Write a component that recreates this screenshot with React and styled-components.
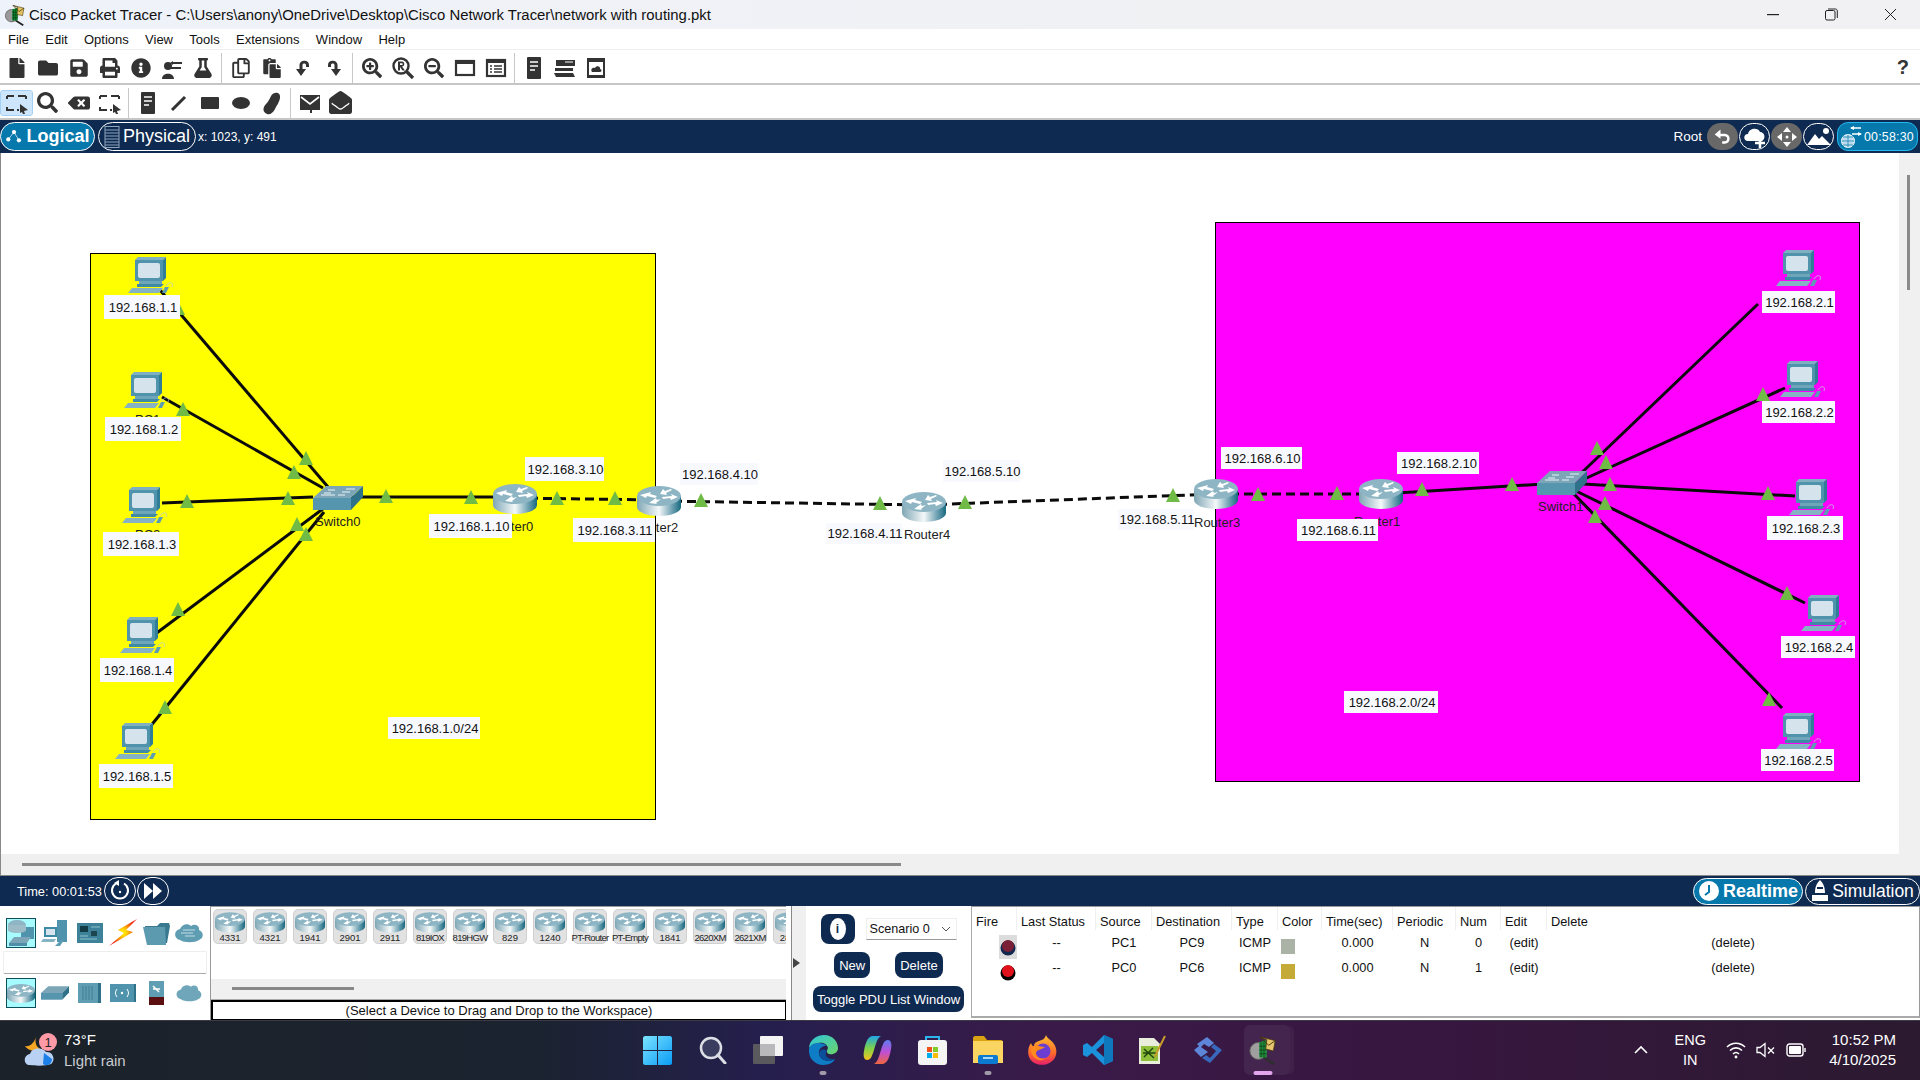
import React, { useId } from 'react';
import styled, { createGlobalStyle } from 'styled-components';
import {
  FaFile, FaFolder, FaSave, FaPrint, FaInfoCircle, FaFlask, FaRegCopy, FaPaste,
  FaSearch, FaSearchPlus, FaSearchMinus, FaBackspace, FaEnvelopeOpen,
} from 'react-icons/fa';

const CANVAS_TOP = 153;
const CANVAS_LEFT = 1;
const NAVY = '#0f2a50';
const BLUE = '#0678ab';

const GlobalStyle = createGlobalStyle`
  html, body {
    margin: 0;
    padding: 0;
    background: #fff;
  }
  * {
    box-sizing: border-box;
  }
  body {
    font-family: "Liberation Sans", Arial, sans-serif;
    color: #111;
  }
`;

const Screen = styled.div`
  width: 1920px;
  height: 1080px;
  display: flex;
  flex-direction: column;
  overflow: hidden;
`;

/* title bar */
const TitleBar = styled.div`
  height: 29px;
  display: flex;
  align-items: center;
  padding-left: 4px;
  background: linear-gradient(90deg, #eef2fa, #f1f1f3 70%);
`;

const TitleText = styled.span`
  margin-left: 3px;
  font-size: 14.9px;
  white-space: nowrap;
`;

const WindowButtons = styled.div`
  margin-left: auto;
  display: flex;
`;

const WindowButton = styled.div`
  width: 59px;
  height: 29px;
  display: flex;
  align-items: center;
  justify-content: center;
`;

/* menu + toolbars */
const MenuBar = styled.div`
  height: 21px;
  display: flex;
  align-items: center;
  gap: 16.3px;
  padding-left: 8px;
  font-size: 13px;
  background: #fff;
  border-bottom: 1px solid #eee;
`;

const ToolBar = styled.div`
  height: 35px;
  display: flex;
  align-items: center;
  padding: 2px 11px 0 1px;
  background: #fff;
  border-bottom: 2px solid #c6c6c6;
`;

const ToolSlot = styled.div`
  width: 31px;
  height: 24px;
  flex: none;
  display: flex;
  align-items: center;
  justify-content: center;
  color: #333;
  font-size: ${(p) => p.$size || 20}px;
  border-radius: 2px;
  background: ${(p) => (p.$active ? '#cde6fb' : 'transparent')};
  outline: ${(p) => (p.$active ? '1px solid #a4d0f5' : 'none')};
`;

const ToolSep = styled.div`
  width: 1px;
  height: 30px;
  flex: none;
  margin: 0 3px;
  background: #c8c8c8;
`;

const HelpMark = styled.span`
  margin-left: auto;
  font-size: 20px;
  font-weight: 700;
  color: #333;
`;

/* dark bars */
const DarkBar = styled.div`
  height: ${(p) => p.$height}px;
  flex: none;
  display: flex;
  align-items: center;
  background: ${NAVY};
  color: #fff;
`;

const ModePill = styled.div`
  height: ${(p) => p.$height || 29}px;
  width: ${(p) => p.$width}px;
  display: flex;
  align-items: center;
  justify-content: center;
  gap: 3px;
  margin-left: ${(p) => p.$left || 0};
  margin-right: ${(p) => p.$right ?? 3}px;
  border: 1px solid #fff;
  border-radius: 15px;
  background: ${(p) => (p.$on ? BLUE : NAVY)};
  font-size: ${(p) => p.$font || 18}px;
  font-weight: ${(p) => (p.$on ? 700 : 400)};
  white-space: nowrap;
`;

const Coordinates = styled.span`
  margin-left: -1px;
  font-size: 12px;
  white-space: nowrap;
`;

const TimeText = styled.span`
  margin-left: 17px;
  font-size: 12.8px;
  white-space: nowrap;
`;

const RootText = styled.span`
  margin-left: auto;
  margin-right: 5px;
  font-size: 13.5px;
`;

const RoundButton = styled.div`
  width: ${(p) => p.$width || 31}px;
  height: ${(p) => p.$height || 27}px;
  flex: none;
  display: flex;
  align-items: center;
  justify-content: center;
  border-radius: 15px;
  background: ${(p) => (p.$grey ? '#686868' : NAVY)};
  border: ${(p) => (p.$grey ? 'none' : '1px solid #fff')};
  margin-left: ${(p) => p.$left || 0}px;
  margin-right: ${(p) => p.$gap || 0}px;
`;

const ClockPill = styled.div`
  width: 81px;
  height: 29px;
  margin: 0 2px 0 3px;
  display: flex;
  align-items: center;
  gap: 2px;
  padding-left: 2px;
  font-size: 12.4px;
  letter-spacing: 0.2px;
  border-radius: 11px;
  background: ${BLUE};
  border: 1px solid #22b8ee;
`;

/* workspace */
const Workspace = styled.div`
  flex: 1;
  display: grid;
  grid-template-columns: 1fr 21px;
  grid-template-rows: 1fr 21px;
  min-height: 0;
  border-left: 1px solid #888;
  border-bottom: 1px solid #888;
  background: #f0f0f0;
`;

const Canvas = styled.div`
  position: relative;
  overflow: hidden;
  background: #fff;
`;

const VScroll = styled.div`
  grid-row: 1 / 3;
  grid-column: 2;
  padding: 22px 0 0 8px;
`;

const VThumb = styled.div`
  width: 3px;
  height: 115px;
  background: #8a8a8a;
`;

const HScroll = styled.div`
  padding: 9px 0 0 21px;
`;

const HThumb = styled.div`
  width: 879px;
  height: 3px;
  background: #8a8a8a;
`;

const Zone = styled.div.attrs((p) => ({
  style: { left: p.$x - CANVAS_LEFT, top: p.$y - CANVAS_TOP, width: p.$w, height: p.$h, background: p.$color },
}))`
  position: absolute;
  border: 1px solid #000;
`;

const Layer = styled.svg`
  position: absolute;
  left: 0;
  top: 0;
  width: 1899px;
  height: 702px;
`;

const Device = styled.div.attrs((p) => ({
  style: { left: p.$x - CANVAS_LEFT, top: p.$y - CANVAS_TOP },
}))`
  position: absolute;
  display: flex;
`;

const DeviceName = styled.span.attrs((p) => ({
  style: { left: p.$x - CANVAS_LEFT, top: p.$y - CANVAS_TOP },
}))`
  position: absolute;
  font-size: 13px;
  line-height: 15px;
  color: #222;
  white-space: nowrap;
`;

const Note = styled.div.attrs((p) => ({
  style: { left: p.$x - CANVAS_LEFT, top: p.$y - CANVAS_TOP, width: p.$w, height: p.$h },
}))`
  position: absolute;
  display: flex;
  align-items: center;
  justify-content: center;
  padding-left: 2px;
  font-size: 13px;
  white-space: nowrap;
  color: #111;
  background: #f8f9ff;
`;

/* bottom panel */
const BottomPanel = styled.div`
  height: 114px;
  flex: none;
  display: grid;
  grid-template-columns: 210px 576px 20px 165px 1fr;
  background: #fff;
`;

const CategoryPane = styled.div`
  display: flex;
  flex-direction: column;
  padding: 12px 3px 0 3px;
`;

const CategoryRow = styled.div`
  height: 30px;
  display: grid;
  grid-template-columns: 32px 36px 33px 34px 33px 32px;
  align-items: center;
  justify-items: center;
  padding-left: 2px;
`;

const CategoryCell = styled.div`
  width: 30px;
  height: 30px;
  display: flex;
  align-items: center;
  justify-content: center;
  background: ${(p) => (p.$active ? '#a6fbff' : 'transparent')};
  border: ${(p) => (p.$active ? '1px solid #0d4f5c' : 'none')};
`;

const SearchBox = styled.div`
  height: 23px;
  margin: 3px 0 4px;
  border: 1px solid #eee;
  border-bottom: 1px solid #aaa;
  border-radius: 2px;
`;

const DevicePane = styled.div`
  display: flex;
  flex-direction: column;
  min-width: 0;
  border-left: 1px solid #999;
  border-top: 1px solid #999;
`;

const TileRow = styled.div`
  height: 72px;
  flex: none;
  display: flex;
  gap: 6px;
  padding: 2px 0 0 2px;
  overflow: hidden;
`;

const Tile = styled.div`
  width: 34px;
  height: 35px;
  flex: none;
  display: flex;
  flex-direction: column;
  align-items: center;
  padding-top: 2px;
  border: 1px solid #cfcfcf;
  border-radius: 5px;
  background: #e2e2e2;
`;

const TileLabel = styled.span`
  font-size: 9.5px;
  line-height: 9px;
  letter-spacing: ${(p) => (p.$tight ? '-0.7px' : '0')};
  white-space: nowrap;
  color: #222;
`;

const TileScroll = styled.div`
  height: 21px;
  flex: none;
  padding: 8px 0 0 21px;
  background: #f0f0f0;
  border-bottom: 1px solid #aaa;
`;

const TileThumb = styled.div`
  width: 122px;
  height: 3px;
  background: #888;
`;

const HintBox = styled.div`
  flex: 1;
  display: flex;
  align-items: center;
  justify-content: center;
  font-size: 13px;
  border: 2px solid #000;
  border-right-width: 1px;
  border-bottom-width: 1px;
`;

const Splitter = styled.div`
  display: flex;
  align-items: center;
  padding-left: 7px;
  background: linear-gradient(90deg, #fff 5px, #888 5px, #888 6px, #f0f0f0 6px);
`;

const SplitArrow = styled.span`
  width: 0;
  height: 0;
  border-left: 7px solid #444;
  border-top: 5px solid transparent;
  border-bottom: 5px solid transparent;
`;

const ScenarioPane = styled.div`
  display: flex;
  flex-direction: column;
  align-items: center;
  padding-top: 8px;
`;

const ScenarioTop = styled.div`
  display: flex;
  align-items: center;
  gap: 11px;
`;

const InfoButton = styled.div`
  width: 34px;
  height: 30px;
  display: flex;
  align-items: center;
  justify-content: center;
  border-radius: 8px;
  background: ${NAVY};
`;

const InfoDot = styled.span`
  width: 16px;
  height: 22px;
  display: flex;
  align-items: center;
  justify-content: center;
  border-radius: 50%;
  background: #fff;
  color: ${NAVY};
  font-size: 12px;
  font-weight: 700;
`;

const ScenarioSelect = styled.div`
  width: 91px;
  height: 22px;
  display: flex;
  align-items: center;
  justify-content: space-between;
  padding: 0 5px 0 3px;
  font-size: 12.6px;
  border-bottom: 1px solid #999;
  border-top: 1px solid #eee;
  border-left: 1px solid #eee;
  border-right: 1px solid #eee;
`;

const ScenarioActions = styled.div`
  display: flex;
  gap: 25px;
  margin-top: 8px;
`;

const NavyButton = styled.div`
  height: 26px;
  padding: 0 ${(p) => p.$pad || 5}px;
  display: flex;
  align-items: center;
  font-size: 13px;
  white-space: nowrap;
  color: #fff;
  border-radius: 8px;
  background: ${NAVY};
  margin-top: ${(p) => p.$top || 0}px;
`;

const PduTable = styled.div`
  border: 1px solid #999;
  border-left: 1px solid #aaa;
  border-bottom: 2px solid #aaa;
  font-size: 12.8px;
  margin-bottom: 2px;
`;

const PduRow = styled.div`
  height: ${(p) => p.$height}px;
  display: grid;
  grid-template-columns: 45px 79px 56px 80px 46px 44px 71px 63px 45px 46px 1fr;
  grid-template-rows: ${(p) => p.$height}px;
  align-items: center;
`;

const PduHead = styled.div`
  height: 100%;
  display: flex;
  align-items: center;
  padding: 5px 0 0 4px;
  white-space: nowrap;
  background: #fff;
  border-right: 1px solid ${(p) => (p.$last ? 'transparent' : '#f0f0f0')};
`;

const PduCell = styled.div`
  display: flex;
  justify-content: center;
  align-items: center;
  white-space: nowrap;
  height: 100%;
`;

const FireCell = styled(PduCell)`
  justify-content: flex-end;
`;

const FireWrap = styled.div`
  width: 18px;
  height: 24px;
  margin-top: 8px;
  display: flex;
  align-items: center;
  justify-content: center;
  background: ${(p) => (p.$grey ? '#dcdcdc' : 'transparent')};
`;

const Swatch = styled.span`
  width: 14px;
  height: 15px;
  margin: 8px 25px 0 0;
  background: ${(p) => p.$color};
`;

/* taskbar */
const Taskbar = styled.div`
  height: 60px;
  flex: none;
  display: flex;
  align-items: center;
  color: #fff;
  background: linear-gradient(90deg, #1b2229 0%, #1b2330 28%, #251f4e 40%, #3a1a48 55%, #37163f 75%, #2b1a30 100%);
  border-top: 1px solid #3c3a44;
`;

const Weather = styled.div`
  width: 630px;
  flex: none;
  display: flex;
  align-items: center;
  padding-left: 24px;
`;

const WeatherText = styled.div`
  margin: 0 0 2px 6px;
  font-size: 15px;
  line-height: 21px;
`;

const WeatherSub = styled.div`
  color: #c8ccd0;
`;

const TaskIcons = styled.div`
  display: flex;
`;

const TaskSlot = styled.div`
  position: relative;
  width: 55px;
  height: 59px;
  display: flex;
  align-items: center;
  justify-content: center;
  padding-bottom: 1px;
`;

const TaskHover = styled.div`
  position: absolute;
  left: 9px;
  top: 4px;
  width: 46px;
  height: 50px;
  border-radius: 6px;
  background: rgba(255, 255, 255, 0.06);
  box-shadow: 5px 0 0 -1px rgba(255, 255, 255, 0.04);
`;

const RunDot = styled.span`
  position: absolute;
  left: 50%;
  bottom: 5px;
  width: ${(p) => (p.$active ? 19 : 7)}px;
  height: 4px;
  transform: translateX(-50%);
  border-radius: 2px;
  background: ${(p) => (p.$active ? '#e3a5ec' : '#a09aa8')};
`;

const Tray = styled.div`
  margin-left: auto;
  margin-bottom: 2px;
  display: flex;
  align-items: center;
  padding-right: 24px;
`;

const TrayLang = styled.div`
  margin-left: 25px;
  width: 34px;
  text-align: center;
  font-size: 14.5px;
  line-height: 20px;
`;

const TrayIcons = styled.div`
  display: flex;
  align-items: center;
  gap: 10px;
  margin-left: 19px;
`;

const TrayClock = styled.div`
  margin-left: 22px;
  text-align: right;
  font-size: 15px;
  line-height: 20px;
`;

/* drawings */
const PcIcon = () => (
  <svg width="46" height="37" viewBox="0 0 46 37">
    <path d="M7 4 L10 1 H38 L35 4 Z" fill="#7fb0c2" />
    <path d="M35 4 L38 1 V22 L35 25 Z" fill="#2f7d97" />
    <rect x="7" y="4" width="28" height="21" fill="#4f93ac" />
    <rect x="10" y="7" width="22" height="15" rx="2" fill="#d5e4ec" />
    <path d="M11 25 H34 V28 H11 Z" fill="#6ea5b9" />
    <path d="M9 28 H36 L33 31 H9 Z" fill="#3f8aa4" />
    <path d="M4 32 H35 L31 37 H0 Z" fill="#85b3c4" />
    <path d="M37 31 H41 L38 37 H34 Z" fill="#5d9db4" />
    <path d="M38 30 C41 25 46 26 44 31" fill="none" stroke="#b8cfd8" strokeWidth="0.8" />
  </svg>
);

const RouterIcon = ({ width = 44, height = 30 }) => {
  const id = useId();
  return (
    <svg width={width} height={height} viewBox="0 0 44 30">
      <defs>
        <linearGradient id={id}>
          <stop offset="0" stopColor="#7fa6b4" />
          <stop offset="0.5" stopColor="#f4f8f9" />
          <stop offset="0.8" stopColor="#6ea1b2" />
          <stop offset="1" stopColor="#17697f" />
        </linearGradient>
      </defs>
      <path d="M0 10 V21 C0 26 10 30 22 30 C34 30 44 26 44 21 V10 Z" fill={`url(#${id})`} />
      <ellipse cx="22" cy="10" rx="22" ry="10" fill="#8db5c4" />
      <path d="M3 9 L14 6 L13 8 L20 10 L18 12 L10 10 L9 12 Z M23 8 L26 3 L28 5 L34 3 L35 4 L29 7 L30 9 Z M25 11 L35 10 L34 8 L41 11 L34 14 L33 12 L26 13 Z M12 17 L19 12 L20 14 L24 13 L19 17 L20 18 Z" fill="#fff" />
    </svg>
  );
};

const SwitchIcon = () => (
  <svg width="50" height="24" viewBox="0 0 50 24">
    <path d="M0 12 L13 0 H50 L38 12 Z" fill="#7ca6b8" />
    <path d="M0 12 H38 V24 H0 Z" fill="#5595ae" />
    <path d="M38 12 L50 0 V11 L38 24 Z" fill="#2f7189" />
    <path d="M15 4 H22 M33 3 H42 M11 7 H18 M29 6 H37 M8 9 H22 M25 9 H32" stroke="#eaf3f6" strokeWidth="1" />
  </svg>
);

const PtLogo = ({ size = 22 }) => (
  <svg width={size} height={size} viewBox="0 0 28 32">
    <circle cx="9" cy="17" r="9" fill="#9a9a9a" stroke="#555" strokeWidth="1" />
    <path d="M15 24 L26 31" stroke="#222" strokeWidth="2.5" />
    <path d="M10 8 L18 5 V24 L10 24 Z" fill="#0f8a2e" />
    <path d="M12 8 V24 M15 7 V24 M10 12 H18 M10 16 H18 M10 20 H18" stroke="#06300f" strokeWidth="0.8" />
    <path d="M11 2 L27 6 L25 17 L17 15 L18 5 Z" fill="#e6c364" stroke="#3a2a00" strokeWidth="0.8" />
    <path d="M11 2 L20 11 L27 6" fill="none" stroke="#3a2a00" strokeWidth="1" />
  </svg>
);

const Glyph = ({ children, w = 24, h = 24, view = '0 0 24 24' }) => (
  <svg width={w} height={h} viewBox={view} fill="currentColor">{children}</svg>
);

const DashRect = () => (
  <Glyph>
    <path d="M2 5 H9 M13 5 H21 M2 5 V8 M21 5 V8 M2 16 V19 H9 M12 19 H14" fill="none" stroke="currentColor" strokeWidth="2" />
    <path d="M15 13 L23 19 L19 20 L20 23 L18 23 L17 21 L15 22 Z" />
  </Glyph>
);

const Tower = () => (
  <Glyph>
    <rect x="5" y="1" width="14" height="22" rx="1" />
    <path d="M8 6 H16 M8 10 H16 M8 14 H13" stroke="#fff" strokeWidth="1.5" />
  </Glyph>
);

const TopTools = [
  [<FaFile key="a" />, <FaFolder key="b" />, <FaSave key="c" />, <FaPrint key="d" />, <FaInfoCircle key="e" />,
    <Glyph key="f"><circle cx="8" cy="10" r="4" /><path d="M2 23 C2 16 14 16 14 23 Z M13 6 H22 V8 H13 Z M11 11 H21 V13 H11 Z M13 5 L10 7 L13 9 Z" /></Glyph>,
    <FaFlask key="g" />],
  [<FaRegCopy key="a" />, <FaPaste key="b" />,
    <Glyph key="c"><path d="M10 20 L5 13 H8.5 V9 C8.5 4 18 3 18 9 V11 H15 V9 C15 7 11.5 7 11.5 9 V13 H15 Z" /></Glyph>,
    <Glyph key="d"><path d="M14 20 L19 13 H15.5 V9 C15.5 4 6 3 6 9 V11 H9 V9 C9 7 12.5 7 12.5 9 V13 H9 Z" /></Glyph>],
  [<FaSearchPlus key="a" />,
    <Glyph key="b"><circle cx="10" cy="10" r="7.5" fill="none" stroke="currentColor" strokeWidth="2.4" /><path d="M15 15 L22 22" stroke="currentColor" strokeWidth="3.2" /><path d="M7 5.5 H11 C14 5.5 14 10.5 11 10.5 L14 14.5 H11.5 L9 11 V14.5 H7 Z M9 7.3 V9 H11 C12 9 12 7.3 11 7.3 Z" /></Glyph>,
    <FaSearchMinus key="c" />,
    <Glyph key="d"><rect x="3" y="5" width="18" height="14" fill="none" stroke="currentColor" strokeWidth="2.2" /><rect x="3" y="5" width="18" height="3" /></Glyph>,
    <Glyph key="e"><rect x="3" y="4" width="18" height="16" fill="none" stroke="currentColor" strokeWidth="2.2" /><rect x="3" y="4" width="18" height="3" /><path d="M6 10 H8 M10 10 H18 M6 13 H8 M10 13 H18 M6 16 H8 M10 16 H18" stroke="currentColor" strokeWidth="1.5" /></Glyph>],
  [<Tower key="a" />,
    <Glyph key="b"><rect x="3" y="4" width="19" height="6" /><rect x="2" y="12" width="18" height="3" /><path d="M1 17 H20 L22 21 H3 Z" /><path d="M12 6 H20" stroke="#fff" strokeWidth="1" /></Glyph>,
    <Glyph key="c"><rect x="3" y="2" width="18" height="20" /><rect x="5" y="6" width="14" height="13" fill="#fff" /><path d="M8 16 C6 13 9 11 11 12 C12 9 17 10 16 13 C18 13 18 16 16 16 Z" /></Glyph>],
];

const Arrow = ({ d, w = 20, h = 20 }) => (
  <svg width={w} height={h} viewBox="0 0 24 24" fill="#fff"><path d={d} /></svg>
);

/* canvas data, page coordinates */
const PCS = [[128, 256], [124, 371], [122, 486], [120, 616], [115, 722], [1776, 249], [1780, 360], [1789, 478], [1801, 594], [1776, 712]];
const SWITCHES = [[313, 486], [1537, 471]];
const ROUTERS = [[493, 484], [637, 486], [902, 492], [1194, 479], [1359, 479]];

const NAMES = [
  ['PC1', 135, 412], ['PC2', 135, 527],
  ['Switch0', 315, 514], ['Router0', 487, 519], ['Router2', 632, 520],
  ['Router4', 904, 527], ['Router3', 1194, 515], ['Router1', 1354, 514], ['Switch1', 1538, 499],
];

const NOTES = [
  ['192.168.1.1', 104, 295, 76, 24], ['192.168.1.2', 105, 417, 76, 24], ['192.168.1.3', 103, 532, 76, 24],
  ['192.168.1.4', 100, 658, 74, 24], ['192.168.1.5', 99, 764, 74, 24], ['192.168.1.0/24', 388, 717, 92, 22],
  ['192.168.3.10', 525, 457, 79, 24], ['192.168.1.10', 429, 514, 83, 24], ['192.168.3.11', 573, 518, 82, 24],
  ['192.168.4.10', 680, 463, 78, 22], ['192.168.4.11', 826, 523, 76, 21], ['192.168.5.10', 943, 460, 77, 22],
  ['192.168.5.11', 1118, 509, 76, 21], ['192.168.6.10', 1221, 447, 81, 22], ['192.168.6.11', 1297, 519, 81, 22],
  ['192.168.2.10', 1397, 452, 82, 22], ['192.168.2.0/24', 1344, 691, 94, 22],
  ['192.168.2.1', 1762, 291, 73, 22], ['192.168.2.2', 1762, 401, 73, 22], ['192.168.2.3', 1767, 516, 76, 24],
  ['192.168.2.4', 1781, 636, 74, 22], ['192.168.2.5', 1761, 749, 73, 22],
];

const SOLID = [
  [160, 290, 328, 487], [162, 397, 323, 488], [162, 503, 313, 497], [150, 638, 324, 508], [145, 733, 324, 512],
  [340, 497, 515, 497], [1381, 494, 1560, 483],
  [1573, 481, 1758, 304], [1580, 481, 1785, 388], [1583, 484, 1795, 496], [1574, 490, 1805, 603], [1573, 493, 1782, 708],
];

const DASHED = [
  [515, 498, 659, 500], [659, 501, 924, 505], [924, 505, 1216, 494], [1216, 494, 1381, 494],
];

const TRIANGLES = [
  [178, 309], [306, 459], [294, 473], [183, 410], [187, 502], [288, 499], [297, 525], [306, 535], [178, 610], [165, 708],
  [386, 497], [471, 498], [557, 499], [615, 499], [701, 501], [880, 504], [965, 503], [1173, 496], [1258, 495], [1337, 494], [1422, 490],
  [1512, 485], [1597, 449], [1606, 463], [1610, 485], [1605, 504], [1595, 517], [1768, 494], [1763, 395], [1787, 594], [1769, 700],
];

const TILES = ['4331', '4321', '1941', '2901', '2911', '819IOX', '819HGW', '829', '1240', 'PT-Router', 'PT-Empty', '1841', '2620XM', '2621XM', '2811'];
const COLUMNS = ['Fire', 'Last Status', 'Source', 'Destination', 'Type', 'Color', 'Time(sec)', 'Periodic', 'Num', 'Edit', 'Delete'];
const PDUS = [
  { from: 'PC1', to: 'PC9', color: '#aab3a5', num: 0, dot: '#7a1f35', under: '#12294f', grey: true },
  { from: 'PC0', to: 'PC6', color: '#c4ab38', num: 1, dot: '#e0101c', under: '#000', grey: false },
];

const WorkspaceCanvas = () => (
  <Canvas>
    <Zone $x={90} $y={253} $w={566} $h={567} $color="#ffff00" />
    <Zone $x={1215} $y={222} $w={645} $h={560} $color="#ff00ff" />
    <Layer viewBox={`${CANVAS_LEFT} ${CANVAS_TOP} 1899 702`}>
      {SOLID.map(([a, b, c, d]) => (
        <line key={`${a}-${b}`} x1={a} y1={b} x2={c} y2={d} stroke="#0b0b0b" strokeWidth="3" />
      ))}
      {DASHED.map(([a, b, c, d]) => (
        <line key={`${a}-${b}`} x1={a} y1={b} x2={c} y2={d} stroke="#0b0b0b" strokeWidth="3" strokeDasharray="9 5" />
      ))}
    </Layer>
    {NAMES.map(([name, x, y]) => <DeviceName key={name} $x={x} $y={y}>{name}</DeviceName>)}
    {PCS.map(([x, y]) => <Device key={`${x}-${y}`} $x={x} $y={y}><PcIcon /></Device>)}
    {SWITCHES.map(([x, y]) => <Device key={x} $x={x} $y={y}><SwitchIcon /></Device>)}
    {ROUTERS.map(([x, y]) => <Device key={x} $x={x} $y={y}><RouterIcon /></Device>)}
    <Layer viewBox={`${CANVAS_LEFT} ${CANVAS_TOP} 1899 702`}>
      {TRIANGLES.map(([x, y]) => (
        <polygon key={`${x}-${y}`} points={`${x},${y - 8} ${x + 7},${y + 6} ${x - 7},${y + 6}`} fill="#6fbb45" />
      ))}
    </Layer>
    {NOTES.map(([text, x, y, w, h]) => <Note key={text} $x={x} $y={y} $w={w} $h={h}>{text}</Note>)}
  </Canvas>
);

const CATEGORY_TOP = [
  <svg key="a" width="28" height="28" viewBox="0 0 28 28"><rect x="14" y="8" width="13" height="12" fill="#4f93ac" /><ellipse cx="10" cy="6" rx="9" ry="5" fill="#8db5c4" /><path d="M1 6 V11 C1 15 19 15 19 11 V6 Z" fill="#9dbcc8" /><path d="M2 24 L7 18 H24 L20 24 Z" fill="#7ca6b8" /><path d="M2 24 H20 V27 H2 Z" fill="#4f8ea8" /></svg>,
  <svg key="b" width="28" height="28" viewBox="0 0 28 28"><rect x="16" y="1" width="10" height="22" fill="#4f93ac" /><rect x="3" y="8" width="13" height="10" fill="#3f8aa4" /><rect x="5" y="10" width="9" height="6" fill="#d5e4ec" /><path d="M2 20 H15 L13 23 H0 Z" fill="#85b3c4" /><path d="M14 27 L20 21 H23 L19 27 Z" fill="#5d9db4" /></svg>,
  <svg key="c" width="26" height="20" viewBox="0 0 26 20"><rect width="26" height="20" fill="#3d8298" /><rect x="3" y="3" width="8" height="6" fill="#143c47" /><rect x="14" y="8" width="6" height="5" fill="#1d4651" /><path d="M3 13 H11 M3 16 H20 M14 4 H23" stroke="#8cc0cf" strokeWidth="1" /></svg>,
  <svg key="d" width="28" height="28" viewBox="0 0 28 28"><defs><radialGradient id="bolt"><stop offset="0.2" stopColor="#ffe000" /><stop offset="1" stopColor="#f01c10" /></radialGradient></defs><path d="M28 0 L9 11 L15 14 L0 27 L24 13 L17 11 Z" fill="url(#bolt)" /></svg>,
  <svg key="e" width="28" height="24" viewBox="0 0 28 24"><path d="M2 5 H14 L17 2 H26 L27 5 L24 22 H5 Z" fill="#38798f" /><path d="M0 6 H22 L23 24 H4 Z" fill="#5c9ab0" /></svg>,
  <svg key="f" width="28" height="20" viewBox="0 0 28 20"><path d="M5 17 C-2 15 -1 7 5 6 C7 1 13 0 16 3 C20 0 25 3 24 7 C29 9 29 15 24 17 C20 20 9 20 5 17 Z" fill="#5f9db3" /><path d="M8 7 H20 M6 10 H18 M10 13 H20" stroke="#c4dbe4" strokeWidth="1.2" /></svg>,
];

const CATEGORY_BOTTOM = [
  <RouterIcon key="a" width={28} height={21} />,
  <svg key="b" width="28" height="16" viewBox="0 0 50 24"><path d="M0 12 L13 0 H50 L38 12 Z" fill="#7ca6b8" /><path d="M0 12 H38 V24 H0 Z" fill="#5595ae" /><path d="M38 12 L50 0 V11 L38 24 Z" fill="#2f7189" /></svg>,
  <svg key="c" width="23" height="20" viewBox="0 0 23 20"><rect width="20" height="20" fill="#5f9db3" /><path d="M20 0 L23 0 V20 H20 Z" fill="#2f7189" /><path d="M5 3 V17 M8 3 V17 M11 3 V17 M14 3 V17" stroke="#3f7f96" strokeWidth="1" /></svg>,
  <svg key="d" width="26" height="18" viewBox="0 0 26 18"><rect width="24" height="18" fill="#4f93ac" /><path d="M24 0 L26 0 V18 H24 Z" fill="#2f7189" /><path d="M7 5 C5 8 5 10 7 13 M17 5 C19 8 19 10 17 13" fill="none" stroke="#fff" /><circle cx="12" cy="9" r="1.2" fill="#fff" /></svg>,
  <svg key="e" width="15" height="24" viewBox="0 0 15 24"><rect width="15" height="16" fill="#5f9db3" /><rect y="16" width="15" height="8" fill="#5c0f10" /><path d="M4 5 L10 11 M4 8 H11" stroke="#fff" strokeWidth="1.5" /></svg>,
  <svg key="f" width="28" height="18" viewBox="0 0 28 20"><path d="M5 17 C-2 15 -1 7 5 6 C7 1 13 0 16 3 C20 0 25 3 24 7 C29 9 29 15 24 17 C20 20 9 20 5 17 Z" fill="#6fa6b9" /></svg>,
];

const Edge = () => (
  <svg width="30" height="30" viewBox="0 0 30 30">
    <defs>
      <linearGradient id="edgeA" x1="0" y1="0" x2="1" y2="1"><stop offset="0" stopColor="#2fc6d8" /><stop offset="1" stopColor="#6cd56a" /></linearGradient>
    </defs>
    <path d="M1 14 C1 4 10 0 16 0 C25 0 30 7 30 13 C30 18 25 20 21 19 C18 18 19 15 20 13 C19 8 14 7 10 8 C5 9 1 12 1 14 Z" fill="url(#edgeA)" />
    <path d="M1 14 C0 24 8 30 15 30 C21 30 26 27 27 24 C20 28 12 25 11 19 C10 14 15 10 19 11 C14 6 2 7 1 14 Z" fill="#0f7cc6" />
    <path d="M11 19 C12 25 20 28 27 24 C21 25 15 21 19 16 C15 13 11 15 11 19 Z" fill="#0a4f99" />
  </svg>
);

const Copilot = () => (
  <svg width="29" height="28" viewBox="0 0 29 28">
    <defs>
      <linearGradient id="copA" x1="0" y1="0" x2="0" y2="1"><stop offset="0" stopColor="#1fa5e8" /><stop offset="0.5" stopColor="#7dd24c" /><stop offset="1" stopColor="#f5c31d" /></linearGradient>
      <linearGradient id="copB" x1="0" y1="0" x2="0" y2="1"><stop offset="0" stopColor="#5b7cf0" /><stop offset="0.5" stopColor="#c04fd6" /><stop offset="1" stopColor="#f0663c" /></linearGradient>
    </defs>
    <path d="M9 0 H18 C14 2 13 8 11 14 C9 20 8 24 4 24 C1 24 0 20 1 15 C2 9 4 1 9 0 Z" fill="url(#copA)" />
    <path d="M20 28 H11 C15 26 16 20 18 14 C20 8 21 4 25 4 C28 4 29 8 28 13 C27 19 25 27 20 28 Z" fill="url(#copB)" />
  </svg>
);

const Store = () => (
  <svg width="29" height="30" viewBox="0 0 29 30">
    <path d="M8 6 V2 H21 V6" fill="none" stroke="#2cb5ea" strokeWidth="2" />
    <rect y="5" width="29" height="25" rx="3" fill="#f4f4f4" />
    <rect x="9" y="12" width="5" height="5" fill="#f1511b" />
    <rect x="15" y="12" width="5" height="5" fill="#80cc28" />
    <rect x="9" y="18" width="5" height="5" fill="#00adef" />
    <rect x="15" y="18" width="5" height="5" fill="#fbbc09" />
  </svg>
);

const Explorer = () => (
  <svg width="30" height="28" viewBox="0 0 30 28">
    <path d="M0 2 C0 1 1 0 2 0 H11 L14 4 H28 C29 4 30 5 30 6 V26 H0 Z" fill="#d9a212" />
    <rect y="5" width="30" height="22" fill="#fbd561" />
    <rect x="5" y="19" width="20" height="9" rx="2" fill="#0c7ad0" />
    <rect x="10" y="21" width="10" height="2" fill="#a9d8f6" />
  </svg>
);

const Firefox = () => (
  <svg width="29" height="30" viewBox="0 0 29 30">
    <defs>
      <linearGradient id="foxA" x1="0" y1="0" x2="0" y2="1"><stop offset="0" stopColor="#ffc130" /><stop offset="0.6" stopColor="#ff6a2a" /><stop offset="1" stopColor="#e8206a" /></linearGradient>
    </defs>
    <path d="M18 0 C19 4 24 5 26 9 C30 15 29 23 23 27 C16 32 6 30 2 24 C-1 19 0 12 3 8 C4 11 5 11 6 11 C6 8 8 7 11 6 C14 5 17 4 18 0 Z" fill="url(#foxA)" />
    <circle cx="15" cy="16" r="7.5" fill="#6b3dd0" />
    <path d="M3 14 C8 8 11 12 17 12 C13 15 9 14 8 18 C7 22 13 25 18 23 C13 28 3 24 3 14 Z" fill="#ff8a1e" />
  </svg>
);

const VsCode = () => (
  <svg width="30" height="30" viewBox="0 0 30 30">
    <path d="M21 0 L30 4 V26 L21 30 L9 18 L4 22 L0 20 V10 L4 8 L9 12 Z M21 8 L13 15 L21 22 Z" fill="#1a93dc" />
    <path d="M21 0 L30 4 V26 L21 30 Z" fill="#0f77bb" />
  </svg>
);

const Notepad = () => (
  <svg width="29" height="30" viewBox="0 0 29 30">
    <path d="M1 3 H16 L22 9 V29 H1 Z" fill="#e9eedc" />
    <rect x="3" y="11" width="17" height="15" fill="#8fbf3a" />
    <path d="M6 14 L16 23 M15 13 L6 22 M5 18 H18" stroke="#20480d" strokeWidth="1.5" />
    <path d="M27 1 L19 17 L17 22" stroke="#c89b2b" strokeWidth="2" fill="none" />
  </svg>
);

const Pcsx = () => (
  <svg width="28" height="26" viewBox="0 0 28 26">
    <path d="M13 0 L20 6 L15 10 L10 7 L7 10 L14 15 L7 20 L0 13 L5 9 L3 7 Z" fill="#5d86d8" />
    <path d="M20 7 L28 13 L16 26 L8 21 L12 18 L16 21 L22 14 L17 10 Z" fill="#3968bc" />
  </svg>
);

const TASK_ICONS = [
  { el: (
    <svg width="29" height="29" viewBox="0 0 29 29">
      <defs><linearGradient id="win" x1="0" y1="0" x2="1" y2="1"><stop offset="0" stopColor="#7be3ff" /><stop offset="1" stopColor="#0a9cf5" /></linearGradient></defs>
      <path d="M0 2 C0 1 1 0 2 0 H14 V14 H0 Z M15 0 H27 C28 0 29 1 29 2 V14 H15 Z M0 15 H14 V29 H2 C1 29 0 28 0 27 Z M15 15 H29 V27 C29 28 28 29 27 29 H15 Z" fill="url(#win)" />
    </svg>
  ) },
  { el: (
    <svg width="28" height="28" viewBox="0 0 28 28">
      <circle cx="12" cy="12" r="10" fill="#3a3d60" stroke="#dcdfe6" strokeWidth="2.5" />
      <path d="M19 19 L26 27" stroke="#dcdfe6" strokeWidth="3" strokeLinecap="round" />
    </svg>
  ) },
  { el: (
    <svg width="30" height="28" viewBox="0 0 30 28">
      <rect x="0" y="8" width="22" height="20" rx="1" fill="#5a5a5e" />
      <rect x="7" y="0" width="23" height="20" rx="1" fill="#f4f4f4" />
      <rect x="7" y="8" width="15" height="12" fill="#b9b9bb" />
    </svg>
  ) },
  { el: <Edge />, dot: true },
  { el: <Copilot /> },
  { el: <Store /> },
  { el: <Explorer />, dot: true },
  { el: <Firefox /> },
  { el: <VsCode /> },
  { el: <Notepad /> },
  { el: <Pcsx /> },
  { el: <PtLogo size={30} />, active: true },
];

const WeatherIcon = () => (
  <svg width="34" height="36" viewBox="0 0 34 36">
    <path d="M12 4 C10 12 14 16 20 17 C14 20 4 18 1 13 C6 14 10 10 12 4 Z" fill="#f5a623" />
    <path d="M6 32 C-1 32 -1 22 6 21 C8 14 19 14 22 19 C29 18 32 27 27 31 C22 33 12 33 6 32 Z" fill="#b9d2f4" />
    <path d="M20 20 L28 26 C28 31 23 34 19 31 Z" fill="#1d7fe8" />
    <circle cx="24" cy="9" r="9" fill="#ff9aa6" />
    <text x="24" y="13.5" fontSize="13" textAnchor="middle" fill="#222" fontFamily="Liberation Sans">1</text>
  </svg>
);

const App = () => (
  <Screen>
    <GlobalStyle />
    <TitleBar>
      <PtLogo size={22} />
      <TitleText>Cisco Packet Tracer - C:\Users\anony\OneDrive\Desktop\Cisco Network Tracer\network with routing.pkt</TitleText>
      <WindowButtons>
        <WindowButton><svg width="12" height="2"><rect width="12" height="1.2" fill="#222" /></svg></WindowButton>
        <WindowButton>
          <svg width="13" height="13" viewBox="0 0 13 13" fill="none" stroke="#222"><rect x="0.5" y="2.5" width="9.5" height="9.5" rx="1.5" /><path d="M3 1 H10.5 C11.5 1 12.3 1.8 12.3 3 V10" /></svg>
        </WindowButton>
        <WindowButton><svg width="13" height="13" viewBox="0 0 13 13" stroke="#222"><path d="M1 1 L12 12 M12 1 L1 12" /></svg></WindowButton>
      </WindowButtons>
    </TitleBar>

    <MenuBar>
      <span>File</span><span>Edit</span><span>Options</span><span>View</span><span>Tools</span><span>Extensions</span><span>Window</span><span>Help</span>
    </MenuBar>

    <ToolBar>
      {TopTools.map((group, i) => (
        <React.Fragment key={i}>
          {i > 0 && <ToolSep />}
          {group.map((icon, j) => <ToolSlot key={j}>{icon}</ToolSlot>)}
        </React.Fragment>
      ))}
      <HelpMark>?</HelpMark>
    </ToolBar>

    <ToolBar>
      <ToolSlot $active><DashRect /></ToolSlot>
      <ToolSlot $size={21}><FaSearch /></ToolSlot>
      <ToolSlot $size={22}><FaBackspace /></ToolSlot>
      <ToolSlot><DashRect /></ToolSlot>
      <ToolSep />
      <ToolSlot><Tower /></ToolSlot>
      <ToolSlot><Glyph><path d="M5 19 L18 6" stroke="currentColor" strokeWidth="3" /></Glyph></ToolSlot>
      <ToolSlot><Glyph><rect x="3" y="6" width="18" height="12" rx="1" /></Glyph></ToolSlot>
      <ToolSlot><Glyph><ellipse cx="12" cy="12" rx="9" ry="6" /></Glyph></ToolSlot>
      <ToolSlot><Glyph><path d="M7 23 C2 21 3 16 6 13 C8 11 9 9 11 5 C14 0 21 1 20 7 C19 12 17 14 15 18 C13 22 10 24 7 23 Z" /></Glyph></ToolSlot>
      <ToolSep />
      <ToolSlot><Glyph><path d="M2 4 H22 V19 H14 V22 H12 V19 H2 Z" /><path d="M3 6 L12 13 L21 6" fill="none" stroke="#fff" strokeWidth="1.6" /></Glyph></ToolSlot>
      <ToolSlot $size={23}><FaEnvelopeOpen /></ToolSlot>
    </ToolBar>

    <DarkBar $height={33}>
      <ModePill $on $width={95}>
        <svg width="18" height="20" viewBox="0 0 22 20"><circle cx="4" cy="13" r="2.6" fill="#fff" /><circle cx="11" cy="4" r="2.6" fill="#fff" /><circle cx="17" cy="14" r="2.6" fill="#fff" /><path d="M4 13 L11 4 L17 14" stroke="#fff" strokeWidth="0.8" fill="none" /></svg>
        Logical
      </ModePill>
      <ModePill $width={98}>
        <svg width="16" height="22" viewBox="0 0 16 22"><rect x="1" y="0.5" width="14" height="21" fill="none" stroke="#8fa4bd" /><path d="M1 4 H15 M1 7 H15 M1 10 H15 M1 13 H15 M1 16 H15 M1 19 H15" stroke="#8fa4bd" /></svg>
        Physical
      </ModePill>
      <Coordinates>x: 1023, y: 491</Coordinates>
      <RootText>Root</RootText>
      <RoundButton $grey $gap={1}><Arrow d="M9 3 L2 9 L9 14 V11 H14 C18 11 18 17 14 17 H11 V20 H14 C22 20 22 8 14 8 H9 Z" /></RoundButton>
      <RoundButton $gap={1}>
        <svg width="24" height="22" viewBox="0 0 24 22" fill="#fff"><path d="M5 15 C0 15 0 8 5 8 C6 2 15 1 17 6 C22 6 23 13 19 15 Z" /><path d="M17 12 V22 M12 17 H22" stroke="#fff" strokeWidth="2.6" /><path d="M15 11 H19 V15 H15 Z" /></svg>
      </RoundButton>
      <RoundButton $grey $gap={1}>
        <svg width="22" height="22" viewBox="0 0 22 22" fill="#fff"><path d="M11 1 L15 6 H7 Z M11 21 L7 16 H15 Z M1 11 L6 7 V15 Z M21 11 L16 15 V7 Z" /><circle cx="11" cy="11" r="1.5" /></svg>
      </RoundButton>
      <RoundButton>
        <svg width="24" height="20" viewBox="0 0 24 20" fill="#fff"><path d="M0 18 L8 7 L12 12 L15 9 L24 18 Z" /><circle cx="19" cy="4" r="3" /></svg>
      </RoundButton>
      <ClockPill>
        <svg width="22" height="24" viewBox="0 0 22 24" fill="none" stroke="#fff"><circle cx="8" cy="16" r="6.5" fill="#bcdcee" /><path d="M8 9.5 V22.5 M1.5 16 H14.5 M3 12 H13 M3 20 H13" stroke="#0678ab" strokeWidth="0.7" /><path d="M11 3 H21 M12 9 H21" strokeWidth="1.6" /><path d="M14 1 L10 3 L14 5 Z M18 7 L22 9 L18 11 Z" fill="#fff" stroke="none" /></svg>
        00:58:30
      </ClockPill>
    </DarkBar>

    <Workspace>
      <WorkspaceCanvas />
      <VScroll><VThumb /></VScroll>
      <HScroll><HThumb /></HScroll>
    </Workspace>

    <DarkBar $height={30}>
      <TimeText>Time: 00:01:53</TimeText>
      <RoundButton $width={32} $height={28} $left={2}>
        <svg width="22" height="22" viewBox="0 0 22 22" fill="none" stroke="#fff" strokeWidth="2"><path d="M7 3.5 A8 8 0 1 0 15 3.5" /><path d="M10 0 V6 L5 3 Z" fill="#fff" stroke="none" /><circle cx="11" cy="12" r="1.2" fill="#fff" stroke="none" /></svg>
      </RoundButton>
      <RoundButton $width={32} $height={28} $left={1}>
        <svg width="20" height="18" viewBox="0 0 20 18" fill="#fff"><path d="M1 1 L10 9 L1 17 Z M10 1 L19 9 L10 17 Z" /></svg>
      </RoundButton>
      <ModePill $on $width={110} $height={27} $left="auto" $right={2}>
        <svg width="22" height="22" viewBox="0 0 22 22"><circle cx="11" cy="11" r="10" fill="#fff" /><path d="M11 5 V12 L7 15" stroke="#0678ab" strokeWidth="2" fill="none" /></svg>
        Realtime
      </ModePill>
      <ModePill $width={115} $height={27} $font={17.5} $right={0}>
        <svg width="18" height="22" viewBox="0 0 18 22" fill="#fff"><path d="M9 0 C13 4 14 8 14 13 H4 C4 8 5 4 9 0 Z M1 15 H17 V21 H1 Z" /><rect x="6" y="7" width="6" height="2" fill="#0f2a50" /></svg>
        Simulation
      </ModePill>
    </DarkBar>

    <BottomPanel>
      <CategoryPane>
        <CategoryRow>
          {CATEGORY_TOP.map((icon, i) => <CategoryCell key={i} $active={i === 0}>{icon}</CategoryCell>)}
        </CategoryRow>
        <SearchBox />
        <CategoryRow>
          {CATEGORY_BOTTOM.map((icon, i) => <CategoryCell key={i} $active={i === 0}>{icon}</CategoryCell>)}
        </CategoryRow>
      </CategoryPane>

      <DevicePane>
        <TileRow>
          {TILES.map((name) => (
            <Tile key={name}>
              <RouterIcon width={30} height={21} />
              <TileLabel $tight={name.length > 5}>{name}</TileLabel>
            </Tile>
          ))}
        </TileRow>
        <TileScroll><TileThumb /></TileScroll>
        <HintBox>(Select a Device to Drag and Drop to the Workspace)</HintBox>
      </DevicePane>

      <Splitter><SplitArrow /></Splitter>

      <ScenarioPane>
        <ScenarioTop>
          <InfoButton><InfoDot>i</InfoDot></InfoButton>
          <ScenarioSelect>
            Scenario 0
            <svg width="10" height="6" viewBox="0 0 10 6" fill="none" stroke="#555"><path d="M1 1 L5 5 L9 1" /></svg>
          </ScenarioSelect>
        </ScenarioTop>
        <ScenarioActions>
          <NavyButton>New</NavyButton>
          <NavyButton>Delete</NavyButton>
        </ScenarioActions>
        <NavyButton $top={8} $pad={4}>Toggle PDU List Window</NavyButton>
      </ScenarioPane>

      <PduTable>
        <PduRow $height={23}>
          {COLUMNS.map((c, i) => <PduHead key={c} $last={i === COLUMNS.length - 1}>{c}</PduHead>)}
        </PduRow>
        {PDUS.map((p) => (
          <PduRow key={p.num} $height={25}>
            <FireCell>
              <FireWrap $grey={p.grey}>
                <svg width="16" height="18" viewBox="0 0 16 18"><circle cx="8" cy="10" r="7.5" fill={p.under} /><circle cx="8" cy="8" r="6" fill={p.dot} /></svg>
              </FireWrap>
            </FireCell>
            <PduCell>--</PduCell>
            <PduCell>{p.from}</PduCell>
            <PduCell>{p.to}</PduCell>
            <PduCell>ICMP</PduCell>
            <PduCell><Swatch $color={p.color} /></PduCell>
            <PduCell>0.000</PduCell>
            <PduCell>N</PduCell>
            <PduCell>{p.num}</PduCell>
            <PduCell>(edit)</PduCell>
            <PduCell>(delete)</PduCell>
          </PduRow>
        ))}
      </PduTable>
    </BottomPanel>

    <Taskbar>
      <Weather>
        <WeatherIcon />
        <WeatherText>
          <div>73°F</div>
          <WeatherSub>Light rain</WeatherSub>
        </WeatherText>
      </Weather>
      <TaskIcons>
        {TASK_ICONS.map((t, i) => (
          <TaskSlot key={i}>
            {t.active && <TaskHover />}
            {t.el}
            {(t.dot || t.active) && <RunDot $active={t.active} />}
          </TaskSlot>
        ))}
      </TaskIcons>
      <Tray>
        <svg width="14" height="9" viewBox="0 0 14 9" fill="none" stroke="#fff" strokeWidth="1.6"><path d="M1 8 L7 2 L13 8" /></svg>
        <TrayLang>ENG<br />IN</TrayLang>
        <TrayIcons>
          <svg width="20" height="18" viewBox="0 0 20 18" fill="none" stroke="#fff" strokeWidth="1.6"><path d="M1 6 C6 1 14 1 19 6 M4 9.5 C7.5 6 12.5 6 16 9.5 M7 13 C9 11 11 11 13 13" /><circle cx="10" cy="16" r="1.4" fill="#fff" stroke="none" /></svg>
          <svg width="20" height="16" viewBox="0 0 20 16" fill="none" stroke="#fff" strokeWidth="1.3"><path d="M1 5.5 H4 L9 1.5 V14.5 L4 10.5 H1 Z" /><path d="M12 5.5 L18 11.5 M18 5.5 L12 11.5" /></svg>
          <svg width="21" height="14" viewBox="0 0 21 14" fill="none" stroke="#fff" strokeWidth="1.4"><rect x="1" y="1" width="16" height="12" rx="2.5" /><rect x="3" y="3" width="12" height="8" rx="1" fill="#fff" stroke="none" /><path d="M19 5 V9" /></svg>
        </TrayIcons>
        <TrayClock>10:52 PM<br />4/10/2025</TrayClock>
      </Tray>
    </Taskbar>
  </Screen>
);

export default App;
